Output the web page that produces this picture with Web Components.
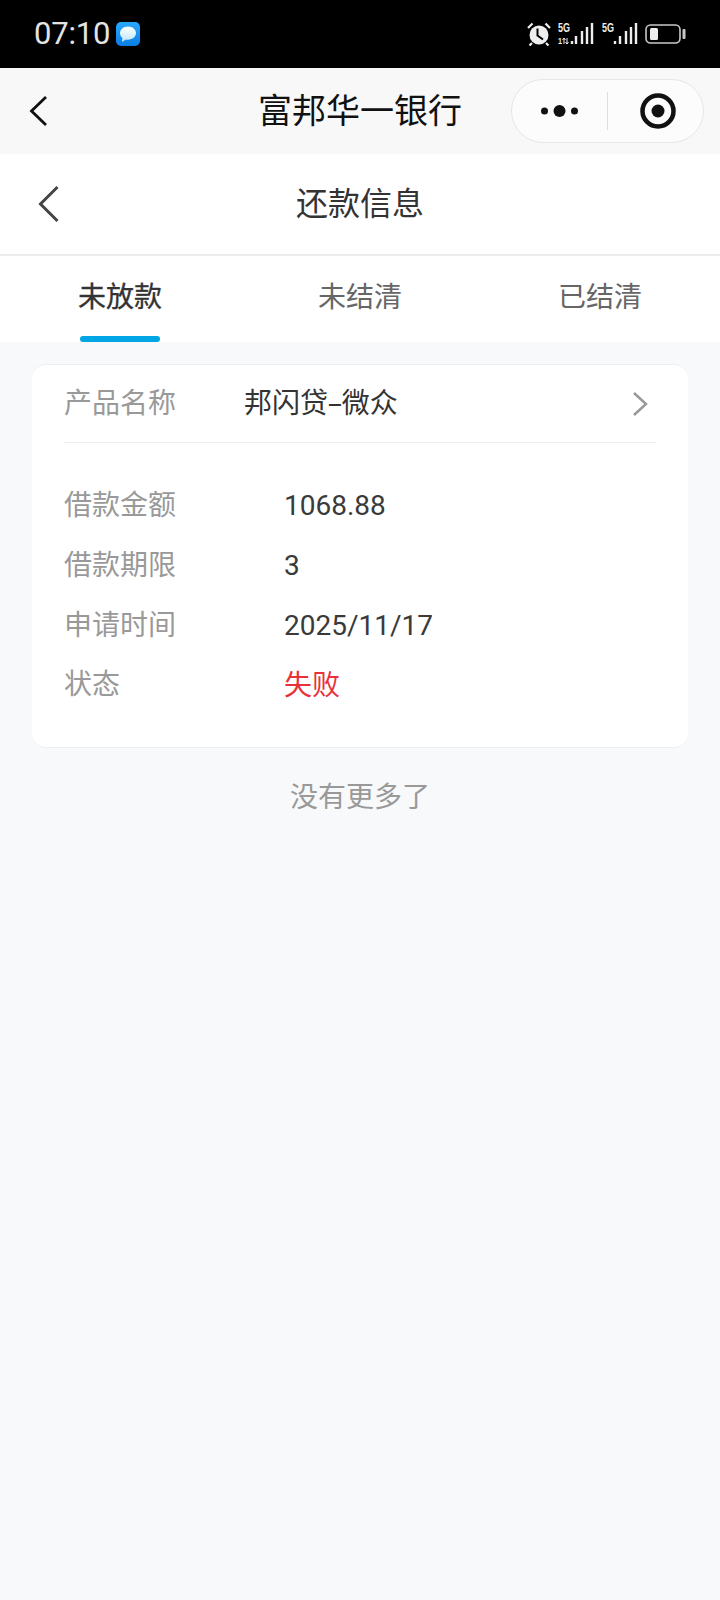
<!DOCTYPE html>
<html lang="zh-CN">
<head>
<meta charset="utf-8">
<title>还款信息</title>
<style>
  html, body { margin: 0; padding: 0; }
  body {
    width: 720px;
    min-height: 1600px;
    background: #f8f9fb;
    font-family: Roboto, "Noto Sans CJK SC", sans-serif;
  }
</style>
</head>
<body>
<status-bar time="07:10"></status-bar>
<mini-nav>富邦华一银行</mini-nav>
<page-header>还款信息</page-header>
<tab-bar>
  <tab-item active>未放款</tab-item>
  <tab-item>未结清</tab-item>
  <tab-item>已结清</tab-item>
</tab-bar>
<main-list>
  <loan-card>
    <span slot="product">邦闪贷<span style="display:inline-block;transform:scaleX(1.8);margin:0 3px">-</span>微众</span>
    <info-row label="借款金额">1068.88</info-row>
    <info-row label="借款期限">3</info-row>
    <info-row label="申请时间">2025/11/17</info-row>
    <info-row label="状态" tone="fail">失败</info-row>
  </loan-card>
  <list-end>没有更多了</list-end>
</main-list>

<script>
class StatusBar extends HTMLElement {
  constructor() {
    super();
    this.attachShadow({ mode: "open" });
  }

  connectedCallback() {
    const time = this.getAttribute("time") || "";
    this.shadowRoot.innerHTML = `
      <style>
        :host {
          display: flex;
          align-items: center;
          height: 68px;
          padding: 0 34px;
          box-sizing: border-box;
          background: #000;
          color: #e4e4e4;
        }
        .time { font-size: 31px; line-height: 68px; letter-spacing: -0.2px; }
        .msg { margin-left: 6px; }
        .right { margin-left: auto; display: flex; align-items: center; }
        svg { display: block; }
        text {
          font-family: "Liberation Sans", sans-serif;
          font-weight: 700;
          fill: #eee;
        }
      </style>
      <span class="time">${time}</span>
      <svg class="msg" width="24" height="24" viewBox="0 0 24 24">
        <defs>
          <linearGradient id="bg" x1="0" y1="0" x2="0" y2="1">
            <stop offset="0" stop-color="#2aa8ff"/><stop offset="1" stop-color="#0a7ee6"/>
          </linearGradient>
          <linearGradient id="bubble" x1="0" y1="0" x2="0" y2="1">
            <stop offset="0" stop-color="#ffffff"/><stop offset="1" stop-color="#bfe6f8"/>
          </linearGradient>
        </defs>
        <rect width="24" height="24" rx="5" fill="url(#bg)"/>
        <path d="M12 4.500c4.500 0 8 2.900 8 6.600s-3.500 6.600-8 6.600c-.8 0-1.500-.1-2.200-.2L6 20l.4-4C4.900 14.800 4 13.100 4 11.100 4 7.400 7.500 4.500 12 4.500z" fill="url(#bubble)"/>
      </svg>
      <div class="right">
        <svg width="24" height="24" viewBox="0 0 24 24" style="margin-right:7px">
          <circle cx="12" cy="13" r="9.500" fill="#eee"/>
          <path d="M10.500 6.500V13.500L16 17.500" fill="none" stroke="#000" stroke-width="2"/>
          <path d="M1 6l4.500-4.500M23 6l-4.500-4.500M5 21l-2.500 2.500M19 21l2.500 2.500" stroke="#eee" stroke-width="2.200" fill="none"/>
        </svg>
        <svg width="36" height="24" viewBox="0 0 36 24">
          <text x="0" y="10" font-size="12" textLength="12" lengthAdjust="spacingAndGlyphs">5G</text>
          <text x="0" y="22" font-size="9" textLength="4" lengthAdjust="spacingAndGlyphs">1</text>
          <path d="M6 22v-6M4.500 18l1.500-2 1.500 2M9 16v6M7.500 20l1.500 2 1.500-2" stroke="#eee" stroke-width="1" fill="none"/>
          <path d="M14 22v-3M18 22v-8M24 22v-13M29 22v-17M34 22v-21" stroke="#eee" stroke-width="2.400" fill="none"/>
        </svg>
        <svg width="36" height="24" viewBox="0 0 36 24" style="margin-left:8px">
          <text x="0" y="10" font-size="12" textLength="12" lengthAdjust="spacingAndGlyphs">5G</text>
          <path d="M13 22v-3M18 22v-8M24 22v-13M29 22v-17M34 22v-21" stroke="#eee" stroke-width="2.400" fill="none"/>
        </svg>
        <svg width="41" height="20" viewBox="0 0 41 20" style="margin-left:7px">
          <rect x="1" y="1" width="34" height="18" rx="4.500" fill="none" stroke="#c8c8c8" stroke-width="1.600"/>
          <rect x="5" y="4" width="8" height="12" rx="1.500" fill="#eee"/>
          <rect x="37.500" y="5" width="3" height="10" rx="1" fill="#c8c8c8"/>
        </svg>
      </div>
    `;
  }
}

class MiniNav extends HTMLElement {
  constructor() {
    super();
    this.attachShadow({ mode: "open" });
    this.shadowRoot.innerHTML = `
      <style>
        :host {
          display: grid;
          grid-template-columns: 1fr auto 1fr;
          align-items: center;
          height: 86px;
          background: #f8f8f8;
          color: #111;
        }
        .back { display: block; margin-left: 29px; }
        .title { font-size: 34px; line-height: 86px; }
        .capsule {
          justify-self: end;
          margin-right: 16px;
          width: 193px;
          height: 64px;
          box-sizing: border-box;
          border: 1px solid #e6e6e6;
          border-radius: 32px;
          background: #fcfcfc;
          display: flex;
          align-items: center;
        }
        .half { flex: 0 0 95px; box-sizing: border-box; display: flex; justify-content: center; align-items: center; }
        .half.target { padding-left: 4px; }
        .line { width: 1px; height: 38px; background: #dedede; }
      </style>
      <svg class="back" width="20" height="32" viewBox="0 0 20 32">
        <path d="M17 2L2.500 16L17 30" fill="none" stroke="#111" stroke-width="2.800"/>
      </svg>
      <div class="title"><slot></slot></div>
      <div class="capsule">
        <div class="half">
          <svg width="38" height="14" viewBox="0 0 38 14">
            <circle cx="3.500" cy="7" r="3.500" fill="#111"/>
            <circle cx="18.500" cy="7" r="6" fill="#111"/>
            <circle cx="33.500" cy="7" r="3.500" fill="#111"/>
          </svg>
        </div>
        <div class="line"></div>
        <div class="half target">
          <svg width="36" height="36" viewBox="0 0 36 36">
            <circle cx="18" cy="18" r="15.500" fill="none" stroke="#111" stroke-width="4.500"/>
            <circle cx="18" cy="18" r="6.500" fill="#111"/>
          </svg>
        </div>
      </div>
    `;
  }
}

class PageHeader extends HTMLElement {
  constructor() {
    super();
    this.attachShadow({ mode: "open" });
    this.shadowRoot.innerHTML = `
      <style>
        :host {
          display: grid;
          grid-template-columns: 1fr auto 1fr;
          align-items: center;
          height: 102px;
          box-sizing: border-box;
          background: #fff;
          border-bottom: 2px solid #ececec;
          color: #333;
        }
        svg { display: block; margin-left: 38px; }
        .title { font-size: 32px; line-height: 100px; }
      </style>
      <svg width="22" height="38" viewBox="0 0 22 38">
        <path d="M19.500 2L2.500 19L19.500 36" fill="none" stroke="#444" stroke-width="3"/>
      </svg>
      <div class="title"><slot></slot></div>
    `;
  }
}

class TabBar extends HTMLElement {
  constructor() {
    super();
    this.attachShadow({ mode: "open" });
    this.shadowRoot.innerHTML = `
      <style>
        :host {
          display: grid;
          grid-template-columns: repeat(3, 1fr);
          height: 86px;
          background: #fff;
        }
      </style>
      <slot></slot>
    `;
  }
}

class TabItem extends HTMLElement {
  constructor() {
    super();
    this.attachShadow({ mode: "open" });
    this.shadowRoot.innerHTML = `
      <style>
        :host {
          display: flex;
          justify-content: center;
          position: relative;
          font-size: 28px;
          line-height: 84px;
          color: #666;
        }
        :host([active]) { color: #333; -webkit-text-stroke: 0.3px #333; }
        :host([active])::after {
          content: "";
          position: absolute;
          left: 80px;
          bottom: 0;
          width: 80px;
          height: 6px;
          border-radius: 3px;
          background: #00a6e4;
        }
      </style>
      <slot></slot>
    `;
  }
}

class MainList extends HTMLElement {
  constructor() {
    super();
    this.attachShadow({ mode: "open" });
    this.shadowRoot.innerHTML = `
      <style>
        :host { display: block; padding: 22px 32px 0; }
      </style>
      <slot></slot>
    `;
  }
}

class LoanCard extends HTMLElement {
  constructor() {
    super();
    this.attachShadow({ mode: "open" });
    this.shadowRoot.innerHTML = `
      <style>
        :host {
          display: block;
          height: 384px;
          box-sizing: border-box;
          background: #fff;
          border-radius: 14px;
          border-top: 1px solid #eeeeee;
          border-bottom: 1px solid #eeeeee;
          padding: 0 32px;
        }
        .head {
          display: flex;
          align-items: center;
          height: 77px;
          border-bottom: 1px solid #f0f0f0;
          font-size: 28px;
        }
        .name { width: 180px; color: #999; padding-bottom: 6px; }
        .value { flex: 1; color: #333; padding-bottom: 6px; }
        svg { display: block; margin-right: 8px; }
        .rows { padding-top: 32px; }
      </style>
      <div class="head">
        <span class="name">产品名称</span>
        <span class="value"><slot name="product"></slot></span>
        <svg width="16" height="26" viewBox="0 0 16 26">
          <path d="M2 2L14 13L2 24" fill="none" stroke="#999" stroke-width="2.500"/>
        </svg>
      </div>
      <div class="rows"><slot></slot></div>
    `;
  }
}

class InfoRow extends HTMLElement {
  constructor() {
    super();
    this.attachShadow({ mode: "open" });
  }

  connectedCallback() {
    const label = this.getAttribute("label") || "";
    this.shadowRoot.innerHTML = `
      <style>
        :host {
          display: flex;
          align-items: center;
          height: 60px;
          font-size: 28px;
          color: #3a3a3a;
        }
        :host([tone="fail"]) { color: #e93237; }
        :host([tone="fail"]) .text { padding-bottom: 4px; }
        :host([tone="fail"]) .label { padding-bottom: 6px; }
        .label { width: 220px; color: #999; padding-bottom: 4px; }
      </style>
      <span class="label">${label}</span>
      <span class="text"><slot></slot></span>
    `;
  }
}

class ListEnd extends HTMLElement {
  constructor() {
    super();
    this.attachShadow({ mode: "open" });
    this.shadowRoot.innerHTML = `
      <style>
        :host {
          display: block;
          text-align: center;
          font-size: 28px;
          line-height: 40px;
          margin-top: 30px;
          color: #999;
        }
      </style>
      <slot></slot>
    `;
  }
}

customElements.define("status-bar", StatusBar);
customElements.define("mini-nav", MiniNav);
customElements.define("page-header", PageHeader);
customElements.define("tab-bar", TabBar);
customElements.define("tab-item", TabItem);
customElements.define("main-list", MainList);
customElements.define("loan-card", LoanCard);
customElements.define("info-row", InfoRow);
customElements.define("list-end", ListEnd);
</script>
</body>
</html>
